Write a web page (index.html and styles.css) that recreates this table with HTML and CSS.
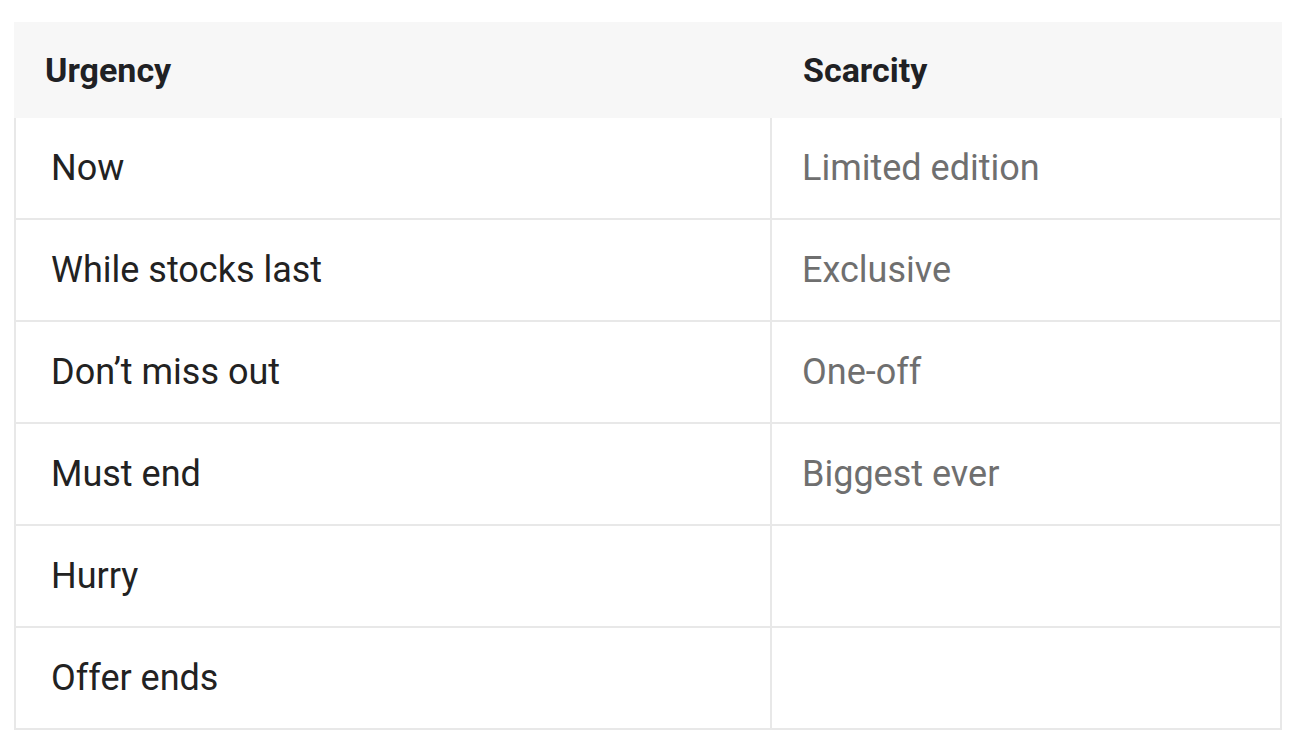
FILE: index.html
```html
<!DOCTYPE html>
<html>
<head>
<meta charset="utf-8">
<link rel="stylesheet" href="styles.css">
</head>
<body>
<table class="words">
  <colgroup><col class="c1"><col class="c2"></colgroup>
  <thead>
    <tr><th class="h1">Urgency</th><th class="h2">Scarcity</th></tr>
  </thead>
  <tbody>
    <tr><td class="u">Now</td><td class="s">Limited edition</td></tr>
    <tr><td class="u">While stocks last</td><td class="s">Exclusive</td></tr>
    <tr><td class="u">Don’t miss out</td><td class="s">One-off</td></tr>
    <tr><td class="u">Must end</td><td class="s">Biggest ever</td></tr>
    <tr><td class="u">Hurry</td><td class="s"></td></tr>
    <tr><td class="u">Offer ends</td><td class="s"></td></tr>
  </tbody>
</table>
</body>
</html>
```

FILE: styles.css
```css
html, body {
  margin: 0;
  padding: 0;
  background: #ffffff;
}
body {
  padding: 22px 0 0 14px;
  font-family: Roboto, "Liberation Sans", sans-serif;
}
.words {
  width: 1268px;
  table-layout: fixed;
  border-collapse: separate;
  border-spacing: 0;
}
.c1 { width: 758px; }
.c2 { width: 510px; }
.words th {
  height: 96px;
  padding: 0 0 0 31px;
  background: #f7f7f7;
  text-align: left;
  font-weight: 700;
  font-size: 34px;
  color: #202124;
  vertical-align: middle;
}
.words th.h2 { padding-left: 31px; }
.words td {
  height: 100px;
  padding: 0;
  font-size: 36px;
  vertical-align: middle;
  border-bottom: 2px solid #e8e8e8;
  border-right: 2px solid #e8e8e8;
}
.words td.u {
  border-left: 2px solid #e8e8e8;
  padding-left: 35px;
  color: #222222;
}
.words td.s {
  padding-left: 30px;
  color: #6f6f6f;
}
```
